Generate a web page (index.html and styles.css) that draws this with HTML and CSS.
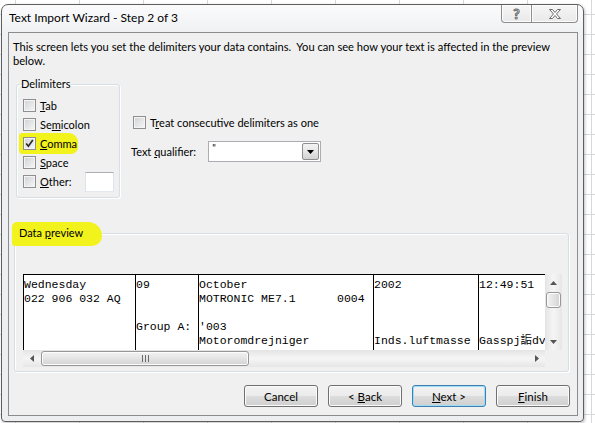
FILE: index.html
```html
<!DOCTYPE html>
<html lang="en">
<head>
    <meta charset="UTF-8">
    <meta name="viewport" content="width=device-width, initial-scale=1.0">
    <title>Text Import Wizard - Step 2 of 3</title>
    <link rel="stylesheet" href="styles.css">
</head>
<body>
    <!-- Dialog window -->
    <div class="window">
        <div class="titlebar">
            <span class="title">Text Import Wizard - Step 2 of 3</span>
            <div class="caption-buttons">
                <span class="cap-btn help">?</span>
                <span class="cap-btn close">
                    <svg width="14" height="12" viewBox="0 0 14 12"><path d="M1.5 1.5h3l2.5 3 2.5-3h3l-4 4.5 4 4.5h-3l-2.5-3-2.5 3h-3l4-4.5z" fill="#fff" stroke="#6a6a6a" stroke-width="1"/></svg>
                </span>
            </div>
        </div>

        <div class="client">
            <p class="intro">This screen lets you set the delimiters your data contains.&nbsp; You can see how your text is affected in the preview<br>below.</p>

            <div class="options">
                <fieldset class="group delimiters">
                    <legend>Delimiters</legend>
                    <div class="check-list">
                        <label class="check-row"><span class="box"></span><span><u>T</u>ab</span></label>
                        <label class="check-row"><span class="box"></span><span>Se<u>m</u>icolon</span></label>
                        <label class="check-row marked"><span class="box checked"><svg width="9" height="9" viewBox="0 0 9 9"><path d="M1.2 4.6l2.2 2.6 4.4-6.2" fill="none" stroke="#262626" stroke-width="1.6"/></svg></span><span><u>C</u>omma</span></label>
                        <label class="check-row"><span class="box"></span><span><u>S</u>pace</span></label>
                        <label class="check-row"><span class="box"></span><span><u>O</u>ther:</span><span class="textbox"></span></label>
                    </div>
                </fieldset>

                <div class="side-options">
                    <label class="check-row treat"><span class="box"></span><span>T<u>r</u>eat consecutive delimiters as one</span></label>
                    <div class="qualifier-row">
                        <span class="qualifier-label">Text <u>q</u>ualifier:</span>
                        <div class="combo">
                            <span class="combo-value">"</span>
                            <span class="combo-btn"><svg width="7" height="4" viewBox="0 0 7 4"><path d="M0 0h7L3.5 4z" fill="#000"/></svg></span>
                        </div>
                    </div>
                </div>
            </div>

            <fieldset class="group preview-group">
                <legend class="marked"><span>Data <u>p</u>review</span></legend>
                <div class="preview">
                    <div class="table">
                        <div class="col c1">Wednesday
022 906 032 AQ</div>
                        <div class="col c2">09


Group A:</div>
                        <div class="col c3">October
MOTRONIC ME7.1      0004

'003
Motoromdrejniger</div>
                        <div class="col c4">2002



Inds.luftmasse</div>
                        <div class="col c5">12:49:51



Gasspj詬dv</div>
                    </div>
                    <div class="vscroll">
                        <span class="arrow"><svg width="7" height="4" viewBox="0 0 7 4"><path d="M0 4h7L3.5 0z" fill="#555"/></svg></span>
                        <span class="thumb v"></span>
                        <span class="spacer"></span>
                        <span class="arrow"><svg width="7" height="4" viewBox="0 0 7 4"><path d="M0 0h7L3.5 4z" fill="#555"/></svg></span>
                    </div>
                    <div class="hscroll">
                        <span class="arrow"><svg width="4" height="7" viewBox="0 0 4 7"><path d="M4 0v7L0 3.5z" fill="#555"/></svg></span>
                        <span class="thumb h"><svg width="7" height="7" viewBox="0 0 7 7"><path d="M0.5 0v7M3.5 0v7M6.5 0v7" stroke="#6a6a6a" stroke-width="1"/></svg></span>
                        <span class="spacer"></span>
                        <span class="arrow"><svg width="4" height="7" viewBox="0 0 4 7"><path d="M0 0v7L4 3.5z" fill="#555"/></svg></span>
                    </div>
                    <div class="corner"></div>
                </div>
            </fieldset>

            <div class="buttons">
                <button type="button">Cancel</button>
                <button type="button">&lt; <u>B</u>ack</button>
                <button type="button" class="default"><u>N</u>ext &gt;</button>
                <button type="button"><u>F</u>inish</button>
            </div>
        </div>
    </div>
</body>
</html>
```

FILE: styles.css
```css
body {
    margin: 0;
    width: 595px;
    height: 423px;
    overflow: hidden;
    font-family: Lato, "Open Sans", sans-serif;
    font-size: 11px;
    color: #000;
    background-color: #fff;
    background-image:
        linear-gradient(to right, #d6d8db 1px, transparent 1px),
        linear-gradient(to bottom, #d6d8db 1px, transparent 1px);
    background-size: 64px 20px;
    background-position: 15px 14px;
}

.window {
    box-sizing: border-box;
    width: 583px;
    height: 418px;
    margin: 4px 0 0 1px;
    padding: 0 5px 5px 6px;
    border: 1px solid #5e5e5e;
    border-radius: 7px 7px 4px 4px;
    background: linear-gradient(#fbfbfc, #eef0f2 30px, #eceef0);
    box-shadow: 1px 1px 3px rgba(0, 0, 0, 0.25);
}

.titlebar {
    height: 27px;
    display: flex;
    align-items: flex-start;
}

.title {
    margin: 5px 0 0 1px;
    font-size: 12px;
    line-height: 16px;
}

.caption-buttons {
    margin-left: auto;
    display: flex;
}

.cap-btn {
    box-sizing: border-box;
    height: 18px;
    display: flex;
    align-items: center;
    justify-content: center;
    border: 1px solid #8d8d8d;
    border-top: none;
    background: linear-gradient(#f6f6f6, #e9e9e9);
    box-shadow: inset 0 0 0 1px #fdfdfd;
}

.cap-btn.help {
    width: 31px;
    border-radius: 0 0 0 4px;
    font-size: 14px;
    font-weight: bold;
    color: #fff;
    -webkit-text-stroke: 1px #6a6a6a;
}

.cap-btn.close {
    width: 46px;
    border-left: none;
    border-radius: 0 0 4px 0;
}

.client {
    box-sizing: border-box;
    height: 384px;
    border: 1px solid #8c8c8c;
    background-color: #f0f0f0;
}

.intro {
    margin: 0;
    padding: 7px 0 0 4px;
    font-size: 11.15px;
    line-height: 14px;
    white-space: nowrap;
}

.options {
    display: flex;
    align-items: flex-start;
}

.group {
    box-sizing: border-box;
    margin: 0;
    padding: 0;
    border: 1px solid #d5dfe5;
    border-radius: 3px;
    box-shadow: inset 1px 1px 0 #fff, 1px 1px 0 #fff;
    min-width: 0;
}

.group legend {
    margin-left: 3px;
    padding: 0 1px;
    line-height: 14px;
}

.delimiters {
    width: 104px;
    height: 121px;
    margin: 9px 0 0 7px;
}

.check-list {
    display: flex;
    flex-direction: column;
    padding: 5px 5px 0 6px;
}

.check-row {
    position: relative;
    height: 19px;
    display: flex;
    align-items: center;
    gap: 4px;
}

.check-row > span {
    position: relative;
}

.box {
    box-sizing: border-box;
    width: 13px;
    height: 13px;
    display: flex;
    align-items: center;
    justify-content: center;
    border: 1px solid #8e8f8f;
    background: linear-gradient(135deg, #cfd1d4, #f7f7f7);
    box-shadow: inset 0 0 0 1px #f4f4f4;
}

.marked::before {
    content: "";
    position: absolute;
    background-color: #f2f21c;
}

.check-row.marked::before {
    left: -4px;
    top: -1px;
    width: 59px;
    height: 21px;
    border-radius: 3px 9px 7px 4px;
}

.textbox {
    box-sizing: border-box;
    width: 29px;
    height: 20px;
    margin-left: auto;
    background-color: #fff;
    border: 1px solid #abadb3;
    border-color: #abadb3 #e2e3ea #e3e9ef;
}

.side-options {
    margin-left: 11px;
    padding-top: 45px;
}

.check-row.treat {
    padding-left: 2px;
}

.qualifier-row {
    margin-top: 9px;
    display: flex;
    align-items: center;
}

.qualifier-label {
    width: 77px;
}

.combo {
    box-sizing: border-box;
    width: 113px;
    height: 21px;
    display: flex;
    justify-content: space-between;
    background-color: #fff;
    border: 1px solid #abadb3;
}

.combo-value {
    padding-left: 3px;
    line-height: 12px;
    font-family: "DejaVu Sans", sans-serif;
    font-size: 9px;
    color: #000;
    will-change: transform;
}

.combo-btn {
    box-sizing: border-box;
    width: 17px;
    height: 17px;
    margin: 1px 1px 0 0;
    display: flex;
    align-items: center;
    justify-content: center;
    border: 1px solid #8f8f8f;
    border-radius: 2px;
    background: linear-gradient(#f3f3f3, #e6e6e6 50%, #d2d2d2);
}

.preview-group {
    width: 555px;
    height: 146px;
    margin: 28px 0 0 5px;
}

.preview-group legend.marked {
    position: relative;
}

.preview-group legend.marked::before {
    left: -6px;
    right: -18px;
    top: -4px;
    bottom: -6px;
    border-radius: 5px 14px 10px 3px;
}

.preview-group legend > span {
    position: relative;
}

.preview {
    width: 539px;
    height: 93px;
    margin: 34px 0 0 8px;
    display: grid;
    grid-template-columns: 522px 17px;
    grid-template-rows: 76px 17px;
    background-color: #fff;
}

.table {
    display: flex;
    overflow: hidden;
    border-top: 1px solid #000;
    font-family: "Liberation Mono", monospace;
    font-size: 11.5px;
    line-height: 14px;
}

.col {
    flex-shrink: 0;
    padding: 3px 0 0 0;
    border-left: 1px solid #000;
    white-space: pre;
}

.c1 { width: 111px; }
.c2 { width: 62px; }
.c3 { width: 174px; }
.c4 { width: 104px; }
.c5 {
    width: 120px;
    font-family: "Liberation Mono", "Noto Sans CJK SC", monospace;
}

.vscroll,
.hscroll {
    display: flex;
    background: linear-gradient(to right, #e4e4e4, #f4f4f4 45%, #f4f4f4 55%, #e6e6e6);
}

.vscroll {
    flex-direction: column;
}

.hscroll {
    background: linear-gradient(#e4e4e4, #f4f4f4 45%, #f4f4f4 55%, #e6e6e6);
}

.arrow {
    width: 17px;
    height: 17px;
    flex-shrink: 0;
    display: flex;
    align-items: center;
    justify-content: center;
}

.spacer {
    flex: 1;
}

.thumb {
    box-sizing: border-box;
    flex-shrink: 0;
    display: flex;
    align-items: center;
    justify-content: center;
    border: 1px solid #979797;
    border-radius: 3px;
    box-shadow: inset 0 0 0 1px #fcfcfc;
}

.thumb.v {
    width: 15px;
    height: 16px;
    margin: 1px 0 0 1px;
    background: linear-gradient(to right, #f2f2f2, #e4e4e4 50%, #d2d2d2);
}

.thumb.h {
    width: 208px;
    height: 15px;
    margin: 1px 0 0 1px;
    background: linear-gradient(#f2f2f2, #e4e4e4 50%, #d2d2d2);
}

.corner {
    background-color: #f0f0f0;
}

.buttons {
    margin-top: 13px;
    padding-right: 7px;
    display: flex;
    justify-content: flex-end;
    gap: 10px;
}

button {
    box-sizing: border-box;
    width: 74px;
    height: 22px;
    padding: 0;
    font-family: Lato, "Open Sans", sans-serif;
    font-size: 11.5px;
    color: #000;
    border: 1px solid #707070;
    border-radius: 3px;
    background: linear-gradient(#f2f2f2, #ebebeb 50%, #dddddd 50%, #cfcfcf);
    box-shadow: inset 0 0 0 1px #fbfbfb;
}

button.default {
    border-color: #3c7fb1;
    box-shadow: inset 0 0 0 1px #9fdcf5;
}
```
